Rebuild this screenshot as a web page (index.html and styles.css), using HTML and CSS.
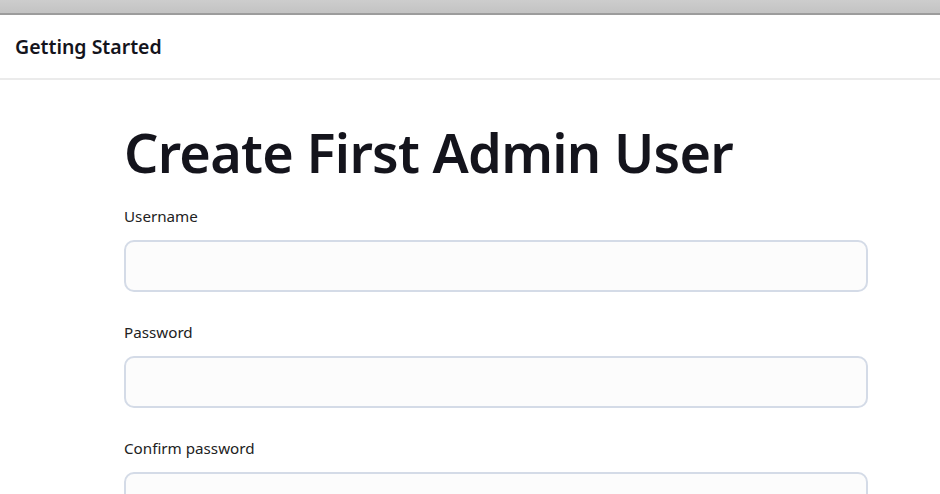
FILE: index.html
```html
<!DOCTYPE html>
<html>
<head>
<meta charset="utf-8">
<link rel="stylesheet" href="styles.css">
</head>
<body>
<div class="chrome"></div>
<header class="topbar"><span class="brand">Getting Started</span></header>
<main class="content">
  <h1 class="title">Create First Admin User</h1>
  <form class="form">
    <div class="field">
      <label class="label">Username</label>
      <input class="input" type="text">
    </div>
    <div class="field">
      <label class="label">Password</label>
      <input class="input" type="password">
    </div>
    <div class="field">
      <label class="label">Confirm password</label>
      <input class="input" type="password">
    </div>
  </form>
</main>
</body>
</html>
```
FILE: styles.css
```css
html, body {
  margin: 0;
  padding: 0;
  background: #fff;
  font-family: "Noto Sans", "Open Sans", sans-serif;
  color: #1b1b22;
  overflow: hidden;
  height: 494px;
}
.chrome {
  height: 13px;
  background: linear-gradient(#cdcdcd, #c3c3c3);
  border-bottom: 2px solid #9c9c9c;
}
.topbar {
  display: flex;
  align-items: center;
  padding-left: 15px;
  border-bottom: 2px solid #ebebeb;
  box-sizing: border-box;
  height: 65px;
}
.brand {
  font-size: 19.5px;
  font-weight: 600;
  color: #14141c;
}
.content {
  padding: 0 0 0 124px;
  width: 744px;
}
.title {
  margin: 40px 0 0 0;
  font-size: 54px;
  font-weight: 600;
  letter-spacing: -0.72px;
  line-height: 64px;
  color: #14141c;
}
.form {
  margin-top: 22px;
  display: flex;
  flex-direction: column;
  gap: 30px;
}
.field {
  display: flex;
  flex-direction: column;
}
.label {
  font-size: 15.2px;
  line-height: 20px;
  color: #222;
  margin-bottom: 14px;
}
.input {
  height: 52px;
  box-sizing: border-box;
  border: 2px solid #d4dbe7;
  border-radius: 10px;
  background: #fcfcfc;
  margin: 0;
  font: inherit;
}
```
